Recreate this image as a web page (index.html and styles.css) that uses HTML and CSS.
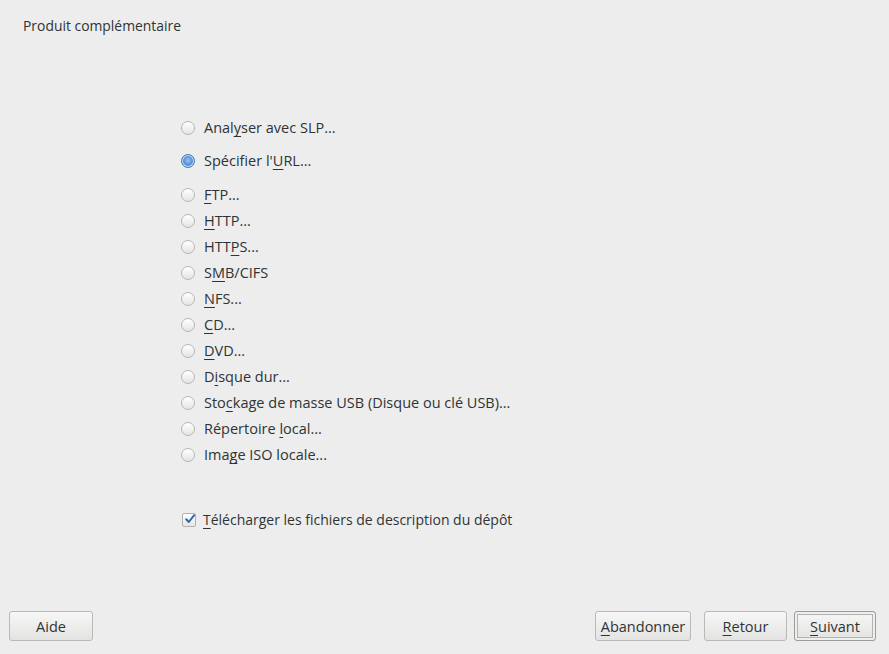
FILE: index.html
```html
<!DOCTYPE html>
<html lang="fr">
<head>
<meta charset="utf-8">
<title>Produit complémentaire</title>
<link rel="stylesheet" href="styles.css">
</head>
<body>
<div class="window">
  <div class="title">Produit complémentaire</div>
  <div class="content">
    <div class="options">
      <label class="opt first"><span class="radio"></span><span>Anal<u>y</u>ser avec SLP...</span></label>
      <label class="opt second"><span class="radio on"></span><span>Spécifier l'<u>U</u>RL...</span></label>
      <label class="opt third"><span class="radio"></span><span><u>F</u>TP...</span></label>
      <label class="opt"><span class="radio"></span><span><u>H</u>TTP...</span></label>
      <label class="opt"><span class="radio"></span><span>HTT<u>P</u>S...</span></label>
      <label class="opt"><span class="radio"></span><span>S<u>M</u>B/CIFS</span></label>
      <label class="opt"><span class="radio"></span><span><u>N</u>FS...</span></label>
      <label class="opt"><span class="radio"></span><span><u>C</u>D...</span></label>
      <label class="opt"><span class="radio"></span><span><u>D</u>VD...</span></label>
      <label class="opt"><span class="radio"></span><span>D<u>i</u>sque dur...</span></label>
      <label class="opt"><span class="radio"></span><span>Sto<u>c</u>kage de masse USB (Disque ou clé USB)...</span></label>
      <label class="opt"><span class="radio"></span><span>Répertoire <u>l</u>ocal...</span></label>
      <label class="opt"><span class="radio"></span><span>Ima<u>g</u>e ISO locale...</span></label>
      <label class="check-row"><span class="check"><svg width="12" height="12" viewBox="0 0 12 12"><path d="M2.2 6.2 L4.8 9 L10.2 2.2" fill="none" stroke="#3465a4" stroke-width="2" stroke-linecap="round" stroke-linejoin="round"/></svg></span><span class="check-label"><u>T</u>élécharger les fichiers de description du dépôt</span></label>
    </div>
  </div>
  <div class="buttons">
    <button class="btn help">Aide</button>
    <div class="spacer"></div>
    <button class="btn abort"><u>A</u>bandonner</button>
    <button class="btn back"><u>R</u>etour</button>
    <button class="btn next focus"><u>S</u>uivant</button>
  </div>
</div>
</body>
</html>
```
FILE: styles.css
```css
html, body {
  margin: 0;
  padding: 0;
  background: #ededed;
}
body {
  font-family: "Open Sans", "DejaVu Sans", sans-serif;
  color: #2e3436;
  font-size: 14.5px;
}
.window {
  width: 889px;
  height: 654px;
  display: flex;
  flex-direction: column;
}
.title {
  font-size: 13.9px;
  padding: 16px 0 0 23px;
  height: 22px;
  line-height: 20px;
}
.content {
  flex: 1;
  padding: 77px 0 0 181px;
}
.options {
  display: flex;
  flex-direction: column;
}
.opt, .check-row {
  display: flex;
  align-items: center;
  height: 26px;
  line-height: 26px;
}
.opt.second { margin-top: 7px; }
.opt.third { margin-top: 8px; }
u {
  text-decoration: underline;
  text-underline-offset: 3px;
  text-decoration-thickness: 1px;
}
.radio {
  width: 12px;
  height: 12px;
  border-radius: 50%;
  border: 1px solid #b6b6b3;
  background: linear-gradient(#ffffff, #e4e4e2);
  margin-right: 9px;
  flex: none;
  box-sizing: content-box;
}
.radio.on {
  border-color: #4a7db9;
  background: radial-gradient(circle at 50% 45%, #9ac2ef 0, #5a97dd 45%, #3c7cd0 70%);
  box-shadow: inset 0 0 0 1px #d9e7f7;
}
.check-row {
  margin-top: 39px;
  margin-left: 1px;
}
.check-label {
  font-size: 14px;
}
.check {
  width: 12px;
  height: 12px;
  border: 1px solid #b0b0ad;
  border-radius: 2px;
  background: linear-gradient(#ffffff, #e6e6e4);
  margin-right: 7px;
  position: relative;
  flex: none;
}
.check svg {
  position: absolute;
  left: 1px;
  top: -1px;
}
.buttons {
  display: flex;
  align-items: center;
  padding: 0 13px 13px 9px;
  gap: 13px;
}
.spacer { flex: 1; }
.btn {
  font-family: inherit;
  font-size: 14.5px;
  color: #2e3436;
  height: 30px;
  border: 1px solid #b9b9b6;
  border-radius: 3px;
  background: linear-gradient(#f7f7f7, #e3e3e1);
  padding: 0;
  box-sizing: border-box;
}
.help { width: 84px; }
.abort { width: 96px; }
.back { width: 83px; }
.next {
  width: 82px;
  margin-left: -6px;
  border-color: #9b9b98;
  box-shadow: inset 0 0 0 2px #efefef, inset 0 0 0 3px #b2b2af;
}
```
